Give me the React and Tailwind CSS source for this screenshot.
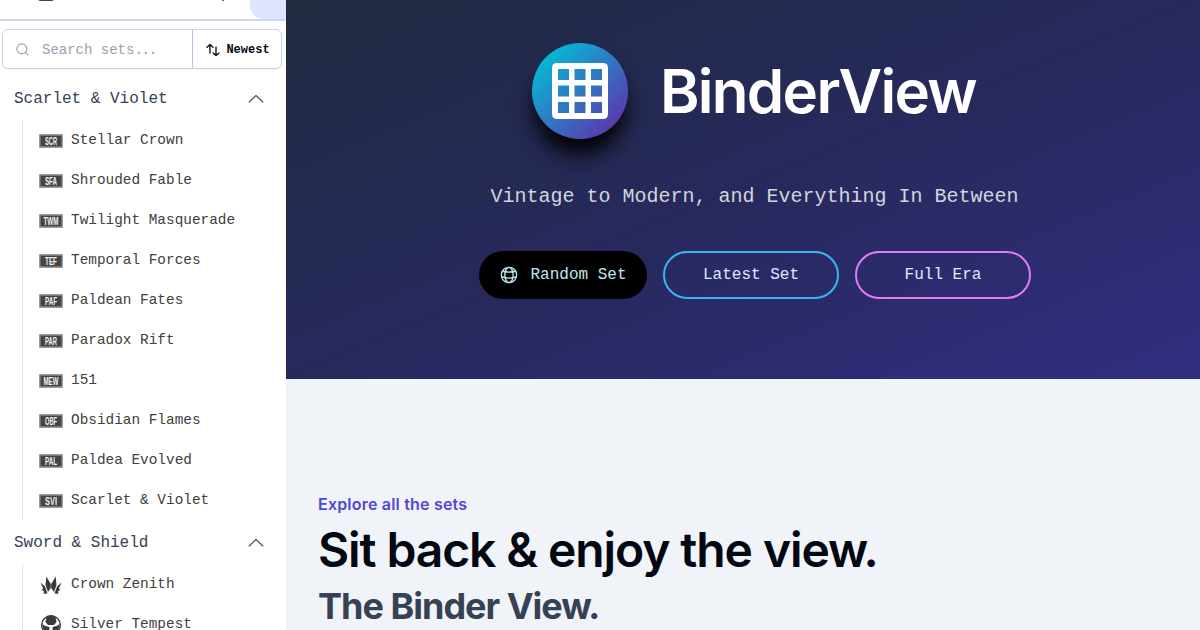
import { Search } from "lucide-react";

const mono = "font-['Liberation_Mono',monospace]";

const scarlet = [
  ["SCR", "Stellar Crown"],
  ["SFA", "Shrouded Fable"],
  ["TWM", "Twilight Masquerade"],
  ["TEF", "Temporal Forces"],
  ["PAF", "Paldean Fates"],
  ["PAR", "Paradox Rift"],
  ["MEW", "151"],
  ["OBF", "Obsidian Flames"],
  ["PAL", "Paldea Evolved"],
  ["SVI", "Scarlet & Violet"],
];

function SetBadge({ code }) {
  const wide = code === "TWM" || code === "MEW";
  return (
    <svg viewBox="0 0 24 18" className="h-[18px] w-6 shrink-0 overflow-visible">
      <rect x="0" y="2" width="24" height="14" rx="1" fill="#9a9a9a" />
      <rect x="1.500" y="3.600" width="21" height="10.800" fill="#444" />
      <text x="12" y="13" textAnchor="middle" textLength={wide ? 15 : 12} lengthAdjust="spacingAndGlyphs" fontSize="11.500" fontWeight="700" fontFamily="Liberation Sans, sans-serif" fill="#f4f4f4">
        {code}
      </text>
    </svg>
  );
}

function CrownMark() {
  return (
    <svg viewBox="0 0 24 24" className="mt-0.5 size-6 shrink-0" fill="#3a3a3a">
      <path d="M7.300 2.500 11.800 10 11.800 14 9 18 6.500 11Z" />
      <path d="M16.700 2.500 12.200 10 12.200 14 15 18 17.500 11Z" />
      <path d="M1.500 8.500 6 12.500 8.500 19.500 4.500 19.800 5 17.500 2.500 15.300 4.200 14.800Z" />
      <path d="M22.500 8.500 18 12.500 15.500 19.500 19.500 19.800 19 17.500 21.500 15.300 19.800 14.800Z" />
    </svg>
  );
}

function TempestMark() {
  return (
    <svg viewBox="0 0 24 24" className="size-6 shrink-0">
      <circle cx="12" cy="12" r="9.300" fill="none" stroke="#3a3a3a" strokeWidth="1.400" />
      <path d="M7.500 4Q12 1 16.500 4L17.500 9 15 12H9L6.500 9Z" fill="#3a3a3a" />
      <path d="M3 11Q7 14 10.500 14L10 20 5 18ZM21 11Q17 14 13.500 14L14 20 19 18Z" fill="#3a3a3a" />
    </svg>
  );
}

function SortIcon() {
  return (
    <svg viewBox="0 0 14 14" className="h-3.5 w-3.5" fill="none" stroke="currentColor" strokeWidth="1.300" strokeLinecap="round" strokeLinejoin="round">
      <path d="M4 10V1.500M1 4.200 4 1.500 7 4.200M10 4V12.500M7.200 10 10 12.500 13 10" />
    </svg>
  );
}

function GroupHeader({ title }) {
  return (
    <div className="flex h-11 items-center justify-between pt-0.5 pr-[22px] pl-3.5 text-base text-gray-700">
      <span>{title}</span>
      <svg viewBox="0 0 16 10" className="h-2.5 w-4" fill="none" stroke="#555" strokeWidth="1.200" strokeLinecap="round" strokeLinejoin="round">
        <path d="M1.200 8 8 1.500 14.800 8" />
      </svg>
    </div>
  );
}

function SetRow({ mark, name }) {
  return (
    <li className="flex h-10 items-center gap-2 pt-px pl-4 text-[14.4px] text-neutral-700">
      <span className="flex w-6 justify-center">{mark}</span>
      <span>{name}</span>
    </li>
  );
}

function Globe() {
  return (
    <svg viewBox="0 0 24 24" className="size-5" fill="none" stroke="currentColor" strokeWidth="1.600">
      <circle cx="12" cy="12" r="9.200" />
      <ellipse cx="12" cy="12" rx="5" ry="9.200" />
      <path d="M4.500 7.500Q12 9.500 19.500 7.500M3 14Q12 17.500 21 14" />
    </svg>
  );
}

function GridLogo() {
  return (
    <div className="flex size-24 items-center justify-center rounded-full bg-linear-to-br/srgb from-[#06b6d4] from-15% to-[#6b21a8] to-100% shadow-[0_18px_22px_-3px_#000]">
      <svg viewBox="0 0 56 56" className="size-14">
        <path fillRule="evenodd" fill="#fff" d="M5 0H51Q56 0 56 5V51Q56 56 51 56H5Q0 56 0 51V5Q0 0 5 0ZM6 6V17H17V6ZM22.500 6V17H33.500V6ZM39 6V17H50V6ZM6 22.500V33.500H17V22.500ZM22.500 22.500V33.500H33.500V22.500ZM39 22.500V33.500H50V22.500ZM6 39V50H17V39ZM22.500 39V50H33.500V39ZM39 39V50H50V39Z" />
      </svg>
    </div>
  );
}

export default function App() {
  return (
    <div className="flex h-[630px] w-[1200px] overflow-hidden bg-[#f0f4f9] font-['Inter',sans-serif]">
      <aside className={`flex w-[286px] shrink-0 flex-col overflow-hidden bg-white ${mono}`}>
        <header className="flex h-[21px] shrink-0 justify-between border-b-2 border-[#ced6f2]">
          <svg viewBox="0 0 20 3" className="ml-9 h-[3px] w-5">
            <path d="M2 0H18L16 1H4Z" fill="#444" />
          </svg>
          <div className="flex">
            <span className="mr-[26px] h-px w-0.5 bg-gray-500" />
            <div className="h-[19px] w-9 rounded-bl-[14px] bg-[#e0e5ff]" />
          </div>
        </header>

        <div className="mt-2 mr-1 ml-0.5 flex h-10 shrink-0 rounded-md border border-[#ccd3e6] shadow-xs">
          <div className="flex w-[190px] items-center gap-3 border-r border-[#b9c5ea] pl-3 text-sm text-gray-400">
            <Search className="size-[15px]" strokeWidth={1.8} />
            <span className="pt-px">Search sets<span className="tracking-[-1.2px]">...</span></span>
          </div>
          <button className="flex flex-1 items-center justify-center gap-1.5 pt-px pl-0.5 text-xs font-bold text-gray-950">
            <SortIcon />
            Newest
          </button>
        </div>

        <div className="mt-[7px] flex flex-col">
          <GroupHeader title="Scarlet & Violet" />
          <ul className="ml-[22px] border-l border-gray-200">
            {scarlet.map(([code, name]) => (
              <SetRow key={code} mark={<SetBadge code={code} />} name={name} />
            ))}
          </ul>
          <GroupHeader title="Sword & Shield" />
          <ul className="ml-[22px] border-l border-gray-200">
            <SetRow mark={<CrownMark />} name="Crown Zenith" />
            <SetRow mark={<TempestMark />} name="Silver Tempest" />
          </ul>
        </div>
      </aside>

      <main className="flex w-[914px] flex-col">
        <section className="flex h-[379px] shrink-0 flex-col items-center bg-linear-to-br/srgb from-[#1f2b40] via-[#27295c] to-[#312e81] pt-[43px] pl-[23px]">
          <div className="flex items-center gap-8 pl-px">
            <GridLogo />
            <h1 className="w-[318px] text-[60px] leading-none font-semibold tracking-[-1.7px] whitespace-nowrap text-white">BinderView</h1>
          </div>
          <p className={`mt-11 text-xl leading-7 whitespace-nowrap text-gray-300 ${mono}`}>
            Vintage to Modern, and Everything In Between
          </p>
          <div className={`mt-10 flex gap-4 pl-px text-base ${mono}`}>
            <button className="flex h-12 w-[168px] items-center justify-center gap-[11px] rounded-full bg-black text-[#bfe6ee]">
              <Globe />
              Random Set
            </button>
            <button className="h-12 w-44 rounded-full border-2 border-[#38b6f4] text-indigo-100">Latest Set</button>
            <button className="h-12 w-44 rounded-full border-2 border-[#e07bf5] text-indigo-100">Full Era</button>
          </div>
        </section>

        <section className="flex flex-col px-8 pt-[113px]">
          <p className="text-base leading-6 font-semibold tracking-[0.2px] whitespace-nowrap text-[#5046d8]">Explore all the sets</p>
          <h2 className="mt-2.5 text-5xl leading-[48px] font-semibold tracking-[-1.1px] whitespace-nowrap text-gray-950">Sit back &amp; enjoy the view.</h2>
          <h3 className="mt-3 text-4xl leading-10 font-bold tracking-[-1px] whitespace-nowrap text-gray-700">The Binder View.</h3>
        </section>
      </main>
    </div>
  );
}
